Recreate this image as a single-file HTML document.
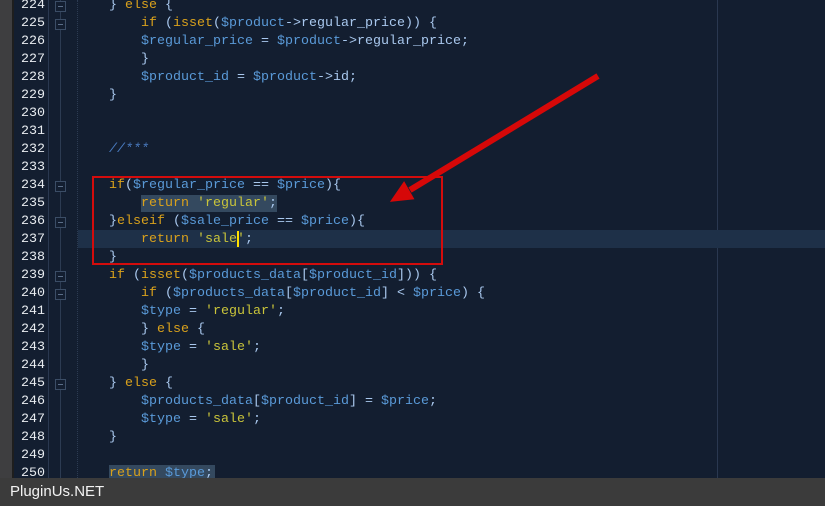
<!DOCTYPE html>
<html><head><style>
body{margin:0;width:825px;height:506px;overflow:hidden;background:#131e30;position:relative;font-family:"Liberation Mono",monospace;}
.l{position:absolute;left:0;width:825px;height:18px;font-size:13.33px;line-height:18px;white-space:pre;}
.n{position:absolute;left:14px;width:31px;text-align:right;color:#e8ecf0;}
.c{position:absolute;left:109px;color:#8ab4e0;}
.k{color:#d9a11c}.v{color:#5a9ad8}.s{color:#c9c43a}.p{color:#a9c8ee}.cm{color:#4a7bc0;font-style:italic}
.fb{position:absolute;left:55px;width:11px;height:11px;border:1px solid #3b4d66;box-sizing:border-box;background:#131e30}
.fb:after{content:"";position:absolute;left:2px;top:4px;width:5px;height:1px;background:#5b6e88;}
</style></head><body>
<div style="position:absolute;left:0;top:0;width:12px;height:478px;background:#3e3e40"></div>
<div style="position:absolute;left:12px;top:0;width:2px;height:478px;background:#1e1e1e"></div>
<div style="position:absolute;left:48px;top:0;width:1px;height:478px;background:#2a3850"></div>
<div style="position:absolute;left:60px;top:0;width:1px;height:478px;background:#2c3b52"></div>
<div style="position:absolute;left:77px;top:0;height:478px;border-left:1px dotted #2c3b52"></div>
<div style="position:absolute;left:717px;top:0;width:1px;height:478px;background:#2a3850"></div>
<div style="position:absolute;left:78px;top:230px;width:747px;height:18px;background:#1e3048"></div>
<div style="position:absolute;left:141px;top:195px;width:136px;height:17px;background:#34495f"></div>
<div style="position:absolute;left:109px;top:465px;width:106px;height:13px;background:#34495f"></div>
<div style="position:absolute;left:237px;top:231px;width:2px;height:16px;background:#ffe000"></div>
<div class="fb" style="top:1px"></div><div class="fb" style="top:19px"></div>
<div class="fb" style="top:181px"></div><div class="fb" style="top:217px"></div>
<div class="fb" style="top:271px"></div><div class="fb" style="top:289px"></div>
<div class="fb" style="top:379px"></div>

<div class="l" style="top:-3px"><span class="n">224</span><span class="c"><span class="p">} </span><span class="k">else</span><span class="p"> {</span></span></div>
<div class="l" style="top:15px"><span class="n">225</span><span class="c">    <span class="k">if</span><span class="p"> (</span><span class="k">isset</span><span class="p">(</span><span class="v">$product</span><span class="p">-&gt;regular_price)) {</span></span></div>
<div class="l" style="top:33px"><span class="n">226</span><span class="c">    <span class="v">$regular_price</span><span class="p"> = </span><span class="v">$product</span><span class="p">-&gt;regular_price;</span></span></div>
<div class="l" style="top:51px"><span class="n">227</span><span class="c"><span class="p">    }</span></span></div>
<div class="l" style="top:69px"><span class="n">228</span><span class="c">    <span class="v">$product_id</span><span class="p"> = </span><span class="v">$product</span><span class="p">-&gt;id;</span></span></div>
<div class="l" style="top:87px"><span class="n">229</span><span class="c"><span class="p">}</span></span></div>
<div class="l" style="top:105px"><span class="n">230</span></div>
<div class="l" style="top:123px"><span class="n">231</span></div>
<div class="l" style="top:141px"><span class="n">232</span><span class="c"><span class="cm">//***</span></span></div>
<div class="l" style="top:159px"><span class="n">233</span></div>
<div class="l" style="top:177px"><span class="n">234</span><span class="c"><span class="k">if</span><span class="p">(</span><span class="v">$regular_price</span><span class="p"> == </span><span class="v">$price</span><span class="p">){</span></span></div>
<div class="l" style="top:195px"><span class="n">235</span><span class="c">    <span class="k">return</span> <span class="s">'regular'</span><span class="p">;</span></span></div>
<div class="l" style="top:213px"><span class="n">236</span><span class="c"><span class="p">}</span><span class="k">elseif</span><span class="p"> (</span><span class="v">$sale_price</span><span class="p"> == </span><span class="v">$price</span><span class="p">){</span></span></div>
<div class="l" style="top:231px"><span class="n">237</span><span class="c">    <span class="k">return</span> <span class="s">'sale'</span><span class="p">;</span></span></div>
<div class="l" style="top:249px"><span class="n">238</span><span class="c"><span class="p">}</span></span></div>
<div class="l" style="top:267px"><span class="n">239</span><span class="c"><span class="k">if</span><span class="p"> (</span><span class="k">isset</span><span class="p">(</span><span class="v">$products_data</span><span class="p">[</span><span class="v">$product_id</span><span class="p">])) {</span></span></div>
<div class="l" style="top:285px"><span class="n">240</span><span class="c">    <span class="k">if</span><span class="p"> (</span><span class="v">$products_data</span><span class="p">[</span><span class="v">$product_id</span><span class="p">] &lt; </span><span class="v">$price</span><span class="p">) {</span></span></div>
<div class="l" style="top:303px"><span class="n">241</span><span class="c">    <span class="v">$type</span><span class="p"> = </span><span class="s">'regular'</span><span class="p">;</span></span></div>
<div class="l" style="top:321px"><span class="n">242</span><span class="c"><span class="p">    } </span><span class="k">else</span><span class="p"> {</span></span></div>
<div class="l" style="top:339px"><span class="n">243</span><span class="c">    <span class="v">$type</span><span class="p"> = </span><span class="s">'sale'</span><span class="p">;</span></span></div>
<div class="l" style="top:357px"><span class="n">244</span><span class="c"><span class="p">    }</span></span></div>
<div class="l" style="top:375px"><span class="n">245</span><span class="c"><span class="p">} </span><span class="k">else</span><span class="p"> {</span></span></div>
<div class="l" style="top:393px"><span class="n">246</span><span class="c">    <span class="v">$products_data</span><span class="p">[</span><span class="v">$product_id</span><span class="p">] = </span><span class="v">$price</span><span class="p">;</span></span></div>
<div class="l" style="top:411px"><span class="n">247</span><span class="c">    <span class="v">$type</span><span class="p"> = </span><span class="s">'sale'</span><span class="p">;</span></span></div>
<div class="l" style="top:429px"><span class="n">248</span><span class="c"><span class="p">}</span></span></div>
<div class="l" style="top:447px"><span class="n">249</span></div>
<div class="l" style="top:465px"><span class="n">250</span><span class="c"><span class="k">return</span> <span class="v">$type</span><span class="p">;</span></span></div>

<div style="position:absolute;left:92px;top:176px;width:351px;height:89px;border:2px solid #d40c0c;box-sizing:border-box"></div>
<svg style="position:absolute;left:0;top:0" width="825" height="506">
<line x1="598" y1="76" x2="410" y2="190" stroke="#d60808" stroke-width="6"/>
<polygon points="393,200 404,184 412,198" fill="#d60808" stroke="#d60808" stroke-width="3"/>
</svg>
<div style="position:absolute;left:0;top:478px;width:825px;height:28px;background:#3b3b3b;color:#f2f2f2;font-family:'Liberation Sans',sans-serif;font-size:15px;line-height:28px;padding-left:10px">PluginUs.NET</div>
</body></html>
